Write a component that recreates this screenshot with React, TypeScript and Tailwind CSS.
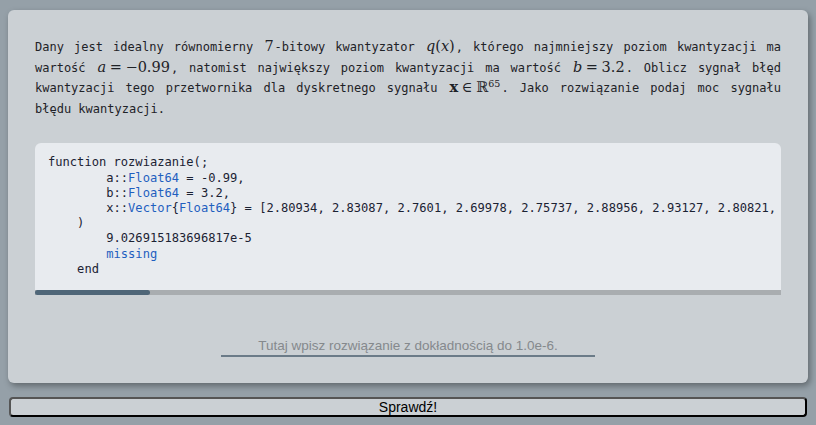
const mono = { fontFamily: '"DejaVu Sans Mono", "Liberation Mono", monospace' };

const M = ({ children, i = false }: { children: React.ReactNode; i?: boolean }) => (
  <span
    className={`px-[1px] font-['DejaVu_Serif','Liberation_Serif',serif] text-[14.5px] leading-none ${i ? 'italic' : ''}`}
  >
    {children}
  </span>
);

const T = ({ children }: { children: React.ReactNode }) => <span className="text-[#1f5fbf]">{children}</span>;

export default function App() {
  return (
    <div className="min-h-[425px] w-[816px] bg-[#95a0a8] pt-[10px] font-['Liberation_Sans',Arial,sans-serif]">
      <div className="mx-2 h-[373px] rounded-md bg-[#cbd0d4] px-[27px] pt-[27px] shadow-[2px_3px_6px_rgba(0,0,0,0.35)]">
        <p className="text-justify text-[12px] leading-[20.6px] text-[#1e2227]" style={mono}>
          Dany jest idealny równomierny <M>7</M>-bitowy kwantyzator{' '}
          <M>
            <i>q</i>(<i>x</i>)
          </M>
          , którego najmniejszy poziom kwantyzacji ma wartość{' '}
          <M>
            <i>a</i>&#8197;=&#8197;−0.99
          </M>
          , natomist największy poziom kwantyzacji ma wartość{' '}
          <M>
            <i>b</i>&#8197;=&#8197;3.2
          </M>
          . Oblicz sygnał błęd kwantyzacji tego przetwornika dla dyskretnego sygnału{' '}
          <M>
            <b>x</b>&#8197;∈&#8197;ℝ<sup className="text-[9.5px]">65</sup>
          </M>
          . Jako rozwiązanie podaj moc sygnału błędu kwantyzacji.
        </p>

        <div className="mt-[24px] overflow-hidden rounded-t-md bg-[#e8ebef]">
          <pre
            className="overflow-hidden px-[13px] pb-[13px] pt-[12px] text-[12.1px] leading-[15.2px] text-[#1b2233]"
            style={mono}
          >
            {'function rozwiazanie(;\n        a::'}
            <T>Float64</T>
            {' = -0.99,\n        b::'}
            <T>Float64</T>
            {' = 3.2,\n        x::'}
            <T>Vector</T>
            {'{'}
            <T>Float64</T>
            {'} = [2.80934, 2.83087, 2.7601, 2.69978, 2.75737, 2.88956, 2.93127, 2.80821, 2.84412, 2.71290]\n    )\n        9.026915183696817e-5\n        '}
            <T>missing</T>
            {'\n    end'}
          </pre>
          <div className="h-[5px] bg-[#a9adb0]">
            <div className="h-[5px] w-[115px] rounded-full bg-[#4f6678]" />
          </div>
        </div>

        <div className="mt-[41px] flex justify-center">
          <input
            className="h-[21px] w-[374px] border-b-2 border-[#6b7b88] bg-transparent text-center text-[13.5px] text-[#222] outline-none placeholder:text-[#85898d]"
            placeholder="Tutaj wpisz rozwiązanie z dokładnością do 1.0e-6."
          />
        </div>
      </div>

      <div className="ml-[9px] mr-[9px] mt-[14px]">
        <button className="block h-[20px] w-full rounded-[4px] border-2 border-t-[#555] border-l-[#555] border-b-black border-r-black bg-[#cbd0d4] text-[14px] leading-none text-black">
          Sprawdź!
        </button>
      </div>
    </div>
  );
}
